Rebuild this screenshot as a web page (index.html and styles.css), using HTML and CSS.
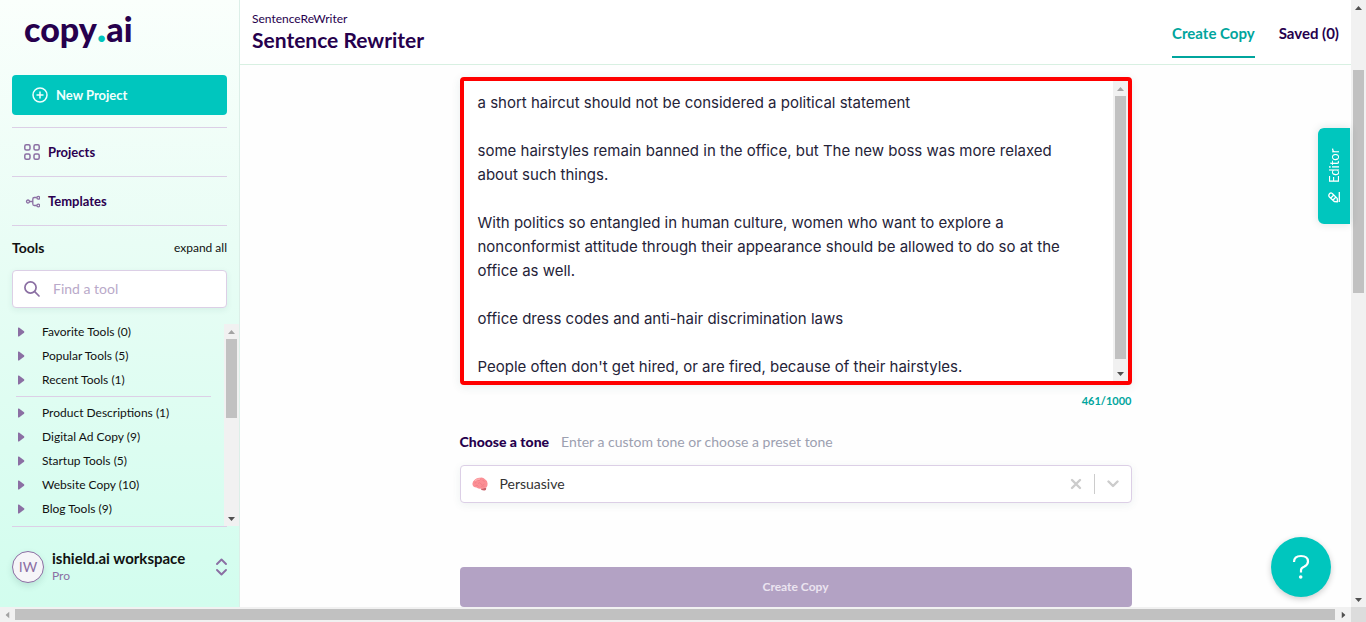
FILE: index.html
```html
<!DOCTYPE html>
<html lang="en">
<head>
<meta charset="utf-8">
<title>Sentence Rewriter</title>
<meta name="viewport" content="width=device-width, initial-scale=1">
<link rel="stylesheet" href="styles.css">
</head>
<body>
<svg class="sprite" aria-hidden="true">
  <symbol id="caret" viewBox="0 0 7 10"><path d="M1 0.500 L6 4.300 Q6.800 5 6 5.700 L1 9.500 Q0 9.800 0 9 V1 Q0 0.200 1 0.500Z" fill="currentColor"/></symbol>
  <symbol id="arrow" viewBox="0 0 7 4"><path d="M0 4 L3.500 0 L7 4Z" fill="currentColor"/></symbol>
</svg>
<div class="shell">
  <aside class="sidebar">
    <a class="logo" href="#">copy<span class="logo-dot">.</span>ai</a>
    <button class="new-project" type="button">
      <svg width="16" height="16" viewBox="0 0 16 16" fill="none" stroke="currentColor" stroke-width="1.500"><circle cx="8" cy="8" r="7"/><path d="M8 4.500v7M4.500 8h7"/></svg>
      New Project
    </button>
    <nav class="nav">
      <a class="nav-link" href="#">
        <svg width="16" height="16" viewBox="0 0 16 16" fill="none" stroke="currentColor" stroke-width="1.500"><rect x="0.800" y="0.800" width="5.200" height="5.200" rx="1.500"/><rect x="10" y="0.800" width="5.200" height="5.200" rx="1.500"/><rect x="0.800" y="10" width="5.200" height="5.200" rx="1.500"/><rect x="10" y="10" width="5.200" height="5.200" rx="1.500"/></svg>
        Projects
      </a>
      <a class="nav-link" href="#">
        <svg width="16" height="16" viewBox="0 0 16 16" fill="none" stroke="currentColor" stroke-width="1.300"><circle cx="4" cy="8.500" r="1.500"/><circle cx="14.300" cy="4.800" r="1.400"/><circle cx="14.300" cy="12.500" r="1.400"/><path d="M5.500 8.500h3.300M12.800 4.500h-2.500q-1.500 0-1.500 1.500v5q0 1.500 1.500 1.500h2.500"/></svg>
        Templates
      </a>
    </nav>
    <div class="tools-head">
      <h2 class="tools-title">Tools</h2>
      <button class="expand" type="button">expand all</button>
    </div>
    <label class="search">
      <svg width="16" height="16" viewBox="0 0 16 16" fill="none" stroke="currentColor" stroke-width="1.700" stroke-linecap="round"><circle cx="6.500" cy="6.500" r="5.600"/><path d="M10.700 10.700 15 15"/></svg>
      <input class="search-input" type="search" placeholder="Find a tool" aria-label="Find a tool">
    </label>
    <div class="tools">
      <div class="tool-list">
        <button class="tool" type="button"><svg class="caret"><use href="#caret"/></svg>Favorite Tools (0)</button>
        <button class="tool" type="button"><svg class="caret"><use href="#caret"/></svg>Popular Tools (5)</button>
        <button class="tool" type="button"><svg class="caret"><use href="#caret"/></svg>Recent Tools (1)</button>
        <hr class="rule">
        <button class="tool" type="button"><svg class="caret"><use href="#caret"/></svg>Product Descriptions (1)</button>
        <button class="tool" type="button"><svg class="caret"><use href="#caret"/></svg>Digital Ad Copy (9)</button>
        <button class="tool" type="button"><svg class="caret"><use href="#caret"/></svg>Startup Tools (5)</button>
        <button class="tool" type="button"><svg class="caret"><use href="#caret"/></svg>Website Copy (10)</button>
        <button class="tool" type="button"><svg class="caret"><use href="#caret"/></svg>Blog Tools (9)</button>
      </div>
      <div class="scrollbar list-scroll" aria-hidden="true">
        <svg class="arrow off"><use href="#arrow"/></svg><span class="thumb"></span><svg class="arrow down"><use href="#arrow"/></svg>
      </div>
    </div>
    <button class="workspace" type="button">
      <span class="avatar">IW</span>
      <span class="workspace-text"><strong class="workspace-name">ishield.ai workspace</strong><span class="plan">Pro</span></span>
      <svg width="11" height="18" viewBox="0 0 11 18" fill="none" stroke="currentColor" stroke-width="1.900" stroke-linecap="round" stroke-linejoin="round"><path d="M1 6 5.500 1.500 10 6M1 12l4.500 4.500L10 12"/></svg>
    </button>
  </aside>

  <main class="main">
    <header class="header">
      <div class="heading">
        <p class="crumb">SentenceReWriter</p>
        <h1 class="title">Sentence Rewriter</h1>
      </div>
      <nav class="tabs">
        <a class="tab active" href="#">Create Copy</a>
        <a class="tab" href="#">Saved (0)</a>
      </nav>
    </header>
    <form class="form">
      <div class="editor-box">
        <textarea class="text" aria-label="Text to rewrite" spellcheck="false">a short haircut should not be considered a political statement

some hairstyles remain banned in the office, but The new boss was more relaxed about such things.

With politics so entangled in human culture, women who want to explore a nonconformist attitude through their appearance should be allowed to do so at the office as well.

office dress codes and anti-hair discrimination laws

People often don't get hired, or are fired, because of their hairstyles.</textarea>
        <div class="scrollbar text-scroll" aria-hidden="true">
          <svg class="arrow off"><use href="#arrow"/></svg><span class="thumb"></span><svg class="arrow down"><use href="#arrow"/></svg>
        </div>
      </div>
      <output class="count">461/1000</output>
      <div class="tone-head">
        <label class="tone-label" for="tone">Choose a tone</label>
        <span class="tone-hint">Enter a custom tone or choose a preset tone</span>
      </div>
      <div class="tone-box">
        <svg width="16" height="14" viewBox="0 0 16 14">
          <path d="M8.500 11.500Q9 13.800 12.500 13.600 14.500 13.200 14.300 10.500Z" fill="#c9626b"/>
          <path d="M.5 7.500Q0 4.500 3 2.500 5 .3 8 .7 11-.2 13 2.300 16 4 15.500 7.500 15.500 10.500 13 10.800 11 12.500 8.500 11.500 6 12 4.500 10.500 1 10.500.5 7.500Z" fill="#fb8f95"/>
          <path d="M2.500 6Q4.500 6.500 4 4.500M5.500 3Q7 4.500 8.500 2.500M10.500 3.500Q12 3 12.500 5M6 6.500Q8 4.500 9 7T12.500 7M3.500 8.500Q5.500 7.500 6.500 9.500M9 9.500Q11 8.500 12.500 9.300" fill="none" stroke="#ec7a83" stroke-width=".6"/>
          <path d="M3 4Q5 1.600 8 2" fill="none" stroke="#ffb9b9" stroke-width="1"/>
        </svg>
        <select class="tone" id="tone"><option>Persuasive</option></select>
        <button class="clear" type="button" aria-label="Clear tone"><svg width="12" height="12" viewBox="0 0 12 12" fill="none" stroke="currentColor" stroke-width="2.400" stroke-linecap="round"><path d="M2 2l8 8M10 2l-8 8"/></svg></button>
        <span class="divider"></span>
        <svg class="chevron" width="12" height="8" viewBox="0 0 12 8" fill="none" stroke="currentColor" stroke-width="2.400" stroke-linecap="round" stroke-linejoin="round"><path d="M1.500 1.500 6 6l4.500-4.500"/></svg>
      </div>
      <button class="submit" type="button">Create Copy</button>
    </form>
    <button class="editor-tab" type="button">
      <svg width="12" height="12" viewBox="0 0 12 12" fill="none" stroke="currentColor" stroke-width="1.300" stroke-linejoin="round"><path d="M1.200 9.500 1.500 6.200 6.300 1.200Q7.800.2 9.200 1.500T9.500 4.200L4.600 9.200ZM3 5 6 8M5.300 3 8 5.800M1 11.300H11"/></svg>
      Editor
    </button>
    <button class="help" type="button" aria-label="Help">
      <svg width="18" height="26" viewBox="0 0 18 26" fill="none" stroke="currentColor" stroke-width="2.200"><path d="M2 8Q2 2 9 2T16 7.500Q16 10.500 12.500 12.500 9 14 9 16V18.500"/><circle cx="8.700" cy="23" r="1.800" fill="currentColor" stroke="none"/></svg>
    </button>
  </main>
  <div class="scrollbar page-scroll" aria-hidden="true">
    <svg class="arrow"><use href="#arrow"/></svg><span class="thumb"></span><svg class="arrow down"><use href="#arrow"/></svg>
  </div>
  <div class="scrollbar wide-scroll" aria-hidden="true">
    <svg class="arrow left off"><use href="#arrow"/></svg><span class="thumb"></span><svg class="arrow right"><use href="#arrow"/></svg>
  </div>
  <div class="corner"></div>
</div>
</body>
</html>
```
FILE: styles.css
```css
* { box-sizing: border-box; }
body {
  margin: 0;
  font-family: Lato, "Liberation Sans", sans-serif;
  font-size: 14px;
  line-height: 16px;
  color: #111;
  background: #fefefe;
}
button, input, select, textarea { font: inherit; color: inherit; }
button { padding: 0; border: 0; background: none; text-align: left; cursor: pointer; }
a { color: inherit; text-decoration: none; }
h1, h2, p { margin: 0; }
svg { display: block; flex: none; }
.sprite { position: absolute; width: 0; height: 0; }

.shell {
  display: grid;
  grid-template-columns: 240px 1fr 15px;
  grid-template-rows: 1fr 15px;
  height: 100vh;
}

/* Sidebar */
.sidebar {
  display: flex;
  flex-direction: column;
  min-height: 0;
  padding: 0 12px;
  border-right: 1px solid #dcefe8;
  background: linear-gradient(#fafffc, #e9fdf5 40%, #d2fdee);
}
.logo {
  height: 75px;
  padding: 7px 12px 0;
  font-size: 34px;
  font-weight: 900;
  line-height: 40px;
  color: #26004d;
}
.logo-dot { font-size: 40px; color: #00c4bc; }
.new-project {
  display: flex;
  align-items: center;
  gap: 8px;
  height: 40px;
  padding: 0 20px;
  border-radius: 4px;
  font-size: 13px;
  font-weight: 700;
  color: #f0fffd;
  background: #00c6be;
}
.nav { margin-top: 12px; border-top: 1px solid #dccfe6; }
.nav-link {
  display: flex;
  align-items: center;
  gap: 8px;
  height: 49px;
  padding: 0 12px;
  border-bottom: 1px solid #dccfe6;
  font-size: 13px;
  font-weight: 700;
  color: #2b0050;
}
.nav-link svg { color: #8b6fa3; }
.tools-head {
  display: flex;
  align-items: center;
  justify-content: space-between;
  height: 44px;
}
.tools-title { font-size: 14px; }
.expand { font-size: 12px; }
.search {
  display: flex;
  align-items: center;
  gap: 12px;
  height: 38px;
  padding: 0 12px 0 11px;
  border: 1px solid #dccfe6;
  border-radius: 4px;
  background: #fff;
  box-shadow: 0 2px 6px rgba(40, 90, 90, .08);
  color: #8b6fa3;
}
.search-input {
  flex: 1;
  min-width: 0;
  padding: 0 1px;
  border: 0;
  outline: 0;
  background: none;
  font-size: 14px;
  color: #26004d;
}
.search-input::placeholder { color: #b9a9c9; }
.tools { display: flex; flex: 1; min-height: 0; margin: 16px -12px 0 0; }
.tool-list {
  display: flex;
  flex: 1;
  flex-direction: column;
  gap: 8px;
  padding: 0 13px 0 4px;
  overflow: hidden;
}
.tool { display: flex; align-items: center; gap: 17px; padding: 0 2px; font-size: 12px; line-height: 16px; flex: none; }
.caret { width: 7px; height: 10px; color: #8b6fa3; }
.rule { width: 100%; margin: 0; border: 0; border-top: 1px solid #dccfe6; }
.workspace {
  display: flex;
  align-items: center;
  gap: 8px;
  height: 81px;
  border-top: 1px solid #dccfe6;
  color: #8b6fa3;
}
.avatar {
  display: grid;
  place-items: center;
  width: 32px;
  height: 32px;
  border: 1px solid #8b6fa3;
  border-radius: 50%;
  background: #f6f5f8;
  box-shadow: 0 3px 6px rgba(40, 90, 90, .15);
}
.workspace-text { display: grid; flex: 1; gap: 2px; }
.workspace-name { font-size: 15px; color: #111; }
.plan { font-size: 12px; }

/* Main area */
.main { min-width: 0; overflow: hidden; }
.header {
  display: flex;
  justify-content: space-between;
  height: 65px;
  padding: 0 12px;
  border-bottom: 1px solid #d8f0e2;
  background: #fff;
  color: #26004d;
}
.heading { padding-top: 11px; }
.crumb { font-size: 12px; }
.title { font-size: 21px; line-height: 26px; }
.tabs { display: flex; gap: 24px; font-size: 15px; font-weight: 700; }
.tab { height: 58px; padding-top: 25px; }
.tab.active { border-bottom: 2px solid #00a59d; color: #00a59d; }
.form {
  display: flex;
  flex-direction: column;
  width: 100%;
  max-width: 672px;
  margin: 12px auto 0;
}
.editor-box {
  display: flex;
  height: 308px;
  border: 4px solid #f00;
  border-radius: 4px;
  background: #fff;
  box-shadow: 0 2px 10px rgba(40, 90, 90, .1);
}
.text {
  flex: 1;
  min-width: 0;
  padding: 10px 24px 10px 14px;
  border: 0;
  outline: 0;
  resize: none;
  overflow: hidden;
  background: none;
  font-family: Inter, Lato, sans-serif;
  font-size: 15px;
  line-height: 24px;
  color: #252338;
}
.count { margin-top: 8px; text-align: right; font-size: 11px; font-weight: 700; color: #00a59d; }
.tone-head { display: flex; gap: 12px; margin-top: 25px; }
.tone-label { font-weight: 900; color: #26004d; }
.tone-hint { color: #9ca0b0; }
.tone-box {
  display: flex;
  align-items: center;
  height: 38px;
  margin-top: 15px;
  padding: 0 12px 0 11px;
  border: 1px solid #dccfe6;
  border-radius: 4px;
  background: #fff;
  box-shadow: 0 2px 8px rgba(40, 90, 90, .08);
  color: #ccc;
}
.tone {
  flex: 1;
  margin-left: 12px;
  padding: 0;
  border: 0;
  outline: 0;
  appearance: none;
  background: none;
  color: #333;
}
.divider { width: 1px; height: 20px; margin: 0 12px; background: #ccc; }
.submit {
  height: 40px;
  margin-top: 64px;
  border-radius: 4px;
  background: #b3a2c4;
  color: #ebe4f0;
  font-size: 12px;
  font-weight: 700;
  text-align: center;
}

/* Floating controls */
.editor-tab {
  position: fixed;
  top: 128px;
  right: 16px;
  display: flex;
  align-items: center;
  justify-content: center;
  gap: 8px;
  width: 32px;
  height: 96px;
  border-radius: 0 6px 6px 0;
  background: #00c6be;
  box-shadow: 0 0 8px rgba(0, 60, 60, .15);
  color: #fff;
  font-size: 13px;
  writing-mode: vertical-rl;
  transform: rotate(180deg);
}
.editor-tab svg { transform: rotate(90deg); }
.help {
  position: fixed;
  right: 35px;
  bottom: 25px;
  display: grid;
  place-items: center;
  width: 60px;
  height: 60px;
  border-radius: 50%;
  background: #00c6be;
  box-shadow: 0 2px 6px rgba(0, 0, 0, .2);
  color: #fff;
}

/* Scrollbars */
.scrollbar { display: grid; width: 15px; background: #f1f1f1; }
.thumb { grid-row: 3; margin: 0 2px; background: #c1c1c1; }
.arrow { width: 7px; height: 4px; place-self: center; grid-row: 1; color: #505050; }
.arrow.off { color: #a3a3a3; }
.arrow.down { grid-row: 5; transform: rotate(180deg); }
.list-scroll { grid-template-rows: 15px 0 79fr 92fr 15px; }
.text-scroll { grid-template-rows: 15px 0 263fr 7fr 15px; }
.page-scroll { grid-template-rows: 15px 55fr 223fr 299fr 15px; }
.wide-scroll {
  grid-column: 1 / 3;
  width: auto;
  grid-template-columns: 15px 1fr 16px;
}
.wide-scroll .thumb { grid-row: 1; grid-column: 2; margin: 2px 0; }
.arrow.left { grid-column: 1; transform: rotate(-90deg); }
.arrow.right { grid-column: 3; transform: rotate(90deg); }
.corner { background: #dcdcdc; }
```
